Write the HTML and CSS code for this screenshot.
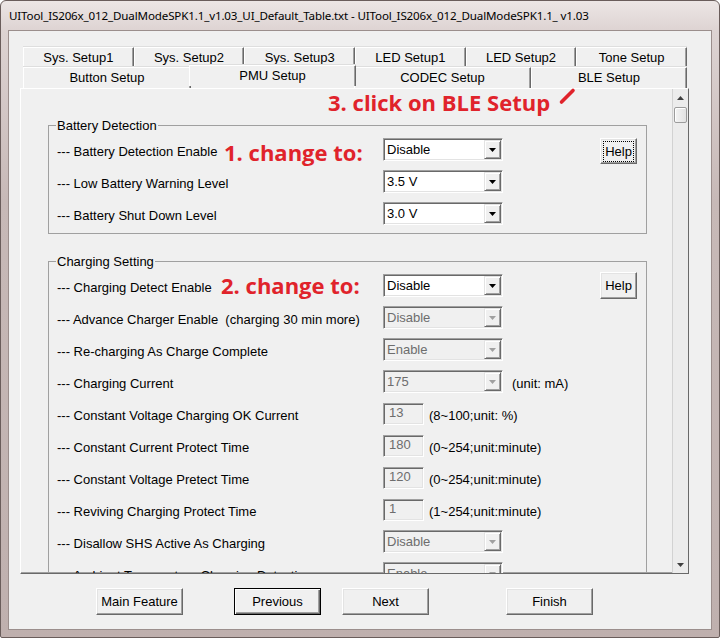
FILE: index.html
```html
<!DOCTYPE html>
<html>
<head>
<meta charset="utf-8">
<link rel="stylesheet" href="styles.css">
</head>
<body>
<div class="window">
  <div class="titlebar">UITool_IS206x_012_DualModeSPK1.1_v1.03_UI_Default_Table.txt - UITool_IS206x_012_DualModeSPK1.1_ v1.03</div>
  <div class="client">
    <div class="tabs">
      <div class="tabrow back">
        <div class="tab">Sys. Setup1</div>
        <div class="tab">Sys. Setup2</div>
        <div class="tab">Sys. Setup3</div>
        <div class="tab">LED Setup1</div>
        <div class="tab">LED Setup2</div>
        <div class="tab">Tone Setup</div>
      </div>
      <div class="tabrow front">
        <div class="tab t-button">Button Setup</div>
        <div class="tab t-pmu selected">PMU Setup</div>
        <div class="tab t-codec">CODEC Setup</div>
        <div class="tab t-ble">BLE Setup</div>
      </div>
    </div>
    <div class="panel">
      <div class="panel-content">
        <fieldset class="group battery">
          <legend>Battery Detection</legend>
          <div class="row">
            <span class="label">--- Battery Detection Enable</span>
            <div class="combo"><span class="combo-text">Disable</span><span class="combo-btn"><svg width="7" height="4" viewBox="0 0 7 4"><path d="M0 0H7L3.5 4Z"/></svg></span></div>
            <button class="help focus"><span>Help</span></button>
          </div>
          <div class="row">
            <span class="label">--- Low Battery Warning Level</span>
            <div class="combo"><span class="combo-text">3.5 V</span><span class="combo-btn"><svg width="7" height="4" viewBox="0 0 7 4"><path d="M0 0H7L3.5 4Z"/></svg></span></div>
          </div>
          <div class="row">
            <span class="label">--- Battery Shut Down Level</span>
            <div class="combo"><span class="combo-text">3.0 V</span><span class="combo-btn"><svg width="7" height="4" viewBox="0 0 7 4"><path d="M0 0H7L3.5 4Z"/></svg></span></div>
          </div>
        </fieldset>
        <fieldset class="group charging">
          <legend>Charging Setting</legend>
          <div class="row">
            <span class="label">--- Charging Detect Enable</span>
            <div class="combo"><span class="combo-text">Disable</span><span class="combo-btn"><svg width="7" height="4" viewBox="0 0 7 4"><path d="M0 0H7L3.5 4Z"/></svg></span></div>
            <button class="help help2"><span>Help</span></button>
          </div>
          <div class="row">
            <span class="label">--- Advance Charger Enable  (charging 30 min more)</span>
            <div class="combo disabled"><span class="combo-text">Disable</span><span class="combo-btn"><svg width="7" height="4" viewBox="0 0 7 4"><path d="M0 0H7L3.5 4Z"/></svg></span></div>
          </div>
          <div class="row">
            <span class="label">--- Re-charging As Charge Complete</span>
            <div class="combo disabled"><span class="combo-text">Enable</span><span class="combo-btn"><svg width="7" height="4" viewBox="0 0 7 4"><path d="M0 0H7L3.5 4Z"/></svg></span></div>
          </div>
          <div class="row">
            <span class="label">--- Charging Current</span>
            <div class="combo disabled"><span class="combo-text">175</span><span class="combo-btn"><svg width="7" height="4" viewBox="0 0 7 4"><path d="M0 0H7L3.5 4Z"/></svg></span></div>
            <span class="suffix after-combo">(unit: mA)</span>
          </div>
          <div class="row">
            <span class="label">--- Constant Voltage Charging OK Current</span>
            <div class="tbox">13</div>
            <span class="suffix">(8~100;unit: %)</span>
          </div>
          <div class="row">
            <span class="label">--- Constant Current Protect Time</span>
            <div class="tbox">180</div>
            <span class="suffix">(0~254;unit:minute)</span>
          </div>
          <div class="row">
            <span class="label">--- Constant Voltage Pretect Time</span>
            <div class="tbox">120</div>
            <span class="suffix">(0~254;unit:minute)</span>
          </div>
          <div class="row">
            <span class="label">--- Reviving Charging Protect Time</span>
            <div class="tbox">1</div>
            <span class="suffix">(1~254;unit:minute)</span>
          </div>
          <div class="row">
            <span class="label">--- Disallow SHS Active As Charging</span>
            <div class="combo disabled"><span class="combo-text">Disable</span><span class="combo-btn"><svg width="7" height="4" viewBox="0 0 7 4"><path d="M0 0H7L3.5 4Z"/></svg></span></div>
          </div>
          <div class="row">
            <span class="label">--- Ambient Temperature Charging Detection</span>
            <div class="combo disabled"><span class="combo-text">Enable</span><span class="combo-btn"><svg width="7" height="4" viewBox="0 0 7 4"><path d="M0 0H7L3.5 4Z"/></svg></span></div>
          </div>
        </fieldset>
      </div>
      <div class="scrollbar">
        <div class="sb-arrow"><svg width="7" height="4" viewBox="0 0 7 4"><path d="M3.5 0L7 4H0Z"/></svg></div>
        <div class="sb-thumb"></div>
        <div class="sb-track"></div>
        <div class="sb-arrow"><svg width="7" height="4" viewBox="0 0 7 4"><path d="M0 0H7L3.5 4Z"/></svg></div>
      </div>
    </div>
    <div class="buttons">
      <button class="btn b-main">Main Feature</button>
      <button class="btn b-prev default">Previous</button>
      <button class="btn b-next">Next</button>
      <button class="btn b-finish">Finish</button>
    </div>
  </div>
  <div class="note note1">1. change to:</div>
  <div class="note note2">2. change to:</div>
  <div class="note note3">3. click on BLE Setup</div>
  <svg class="slash" width="20" height="18" viewBox="0 0 20 18"><path d="M3.5 15L15 3.5" stroke="#e0232b" stroke-width="3.6" stroke-linecap="round"/></svg>
</div>
</body>
</html>
```

FILE: styles.css
```css
* { box-sizing: border-box; }
html, body { margin: 0; padding: 0; background: #ffffff; }
body { font-family: "Liberation Sans", Arial, sans-serif; font-size: 13px; color: #000; }

.window {
  position: relative;
  width: 720px;
  height: 638px;
  display: flex;
  flex-direction: column;
  background: linear-gradient(to bottom, #ece6e5 0px, #ddd3d2 30px, #c7b9b7 200px, #bfb0ae 638px);
  border: 1px solid #6a5d5b;
  border-radius: 6px 6px 2px 2px;
  overflow: hidden;
}

.titlebar {
  height: 29px;
  line-height: 29px;
  padding-left: 8px;
  font-family: "Noto Sans", "DejaVu Sans", sans-serif;
  font-size: 11.6px;
  letter-spacing: -0.15px;
  white-space: nowrap;
  color: #000;
}

.client {
  margin: 0 7px;
  height: 600px;
  background: #f0f0f0;
  border: 1px solid #9b8e8c;
  padding: 16px 0 0 11px;
}

/* tabs */
.tabs { margin-left: 3px; width: 664px; }
.tabrow { display: flex; align-items: flex-start; }
.tabrow.back { height: 20px; }
.tabrow.front { height: 21px; }
.tab {
  height: 20px;
  text-align: center;
  line-height: 19px;
  background: #f0f0f0;
  border-top: 1px solid #ffffff;
  border-left: 1px solid #ffffff;
  border-right: 1px solid #696969;
  box-shadow: inset -1px 0 0 #a0a0a0, 0 -1px 0 #dedede;
  white-space: nowrap;
}
.tabrow.back .tab { flex: 1; }
.tabrow.front .tab { height: 21px; line-height: 20px; }
.t-button { width: 168px; }
.t-pmu { width: 163px; }
.t-codec { width: 177px; }
.t-ble { width: 156px; }
.tab.selected {
  position: relative;
  z-index: 2;
  width: 167px;
  height: 24px;
  margin: -2px -2px 0 -2px;
  line-height: 21px;
}

/* panel */
.panel {
  width: 669px;
  height: 486px;
  display: flex;
  border-top: 1px solid #ffffff;
  border-left: 1px solid #ffffff;
  border-right: 1px solid #696969;
  border-bottom: 1px solid #696969;
  box-shadow: inset -1px -1px 0 #a0a0a0;
}
.panel-content {
  flex: 1;
  overflow: hidden;
  padding: 29px 25px 0 27px;
}

.group {
  margin: 0;
  min-width: 0;
  border: 1px solid #a0a0a0;
  padding: 3px 9px 1px 8px;
}
.group legend {
  padding: 0 1px;
  margin-left: -1px;
  line-height: 15px;
}
.charging { margin-top: 20px; }

.row { display: flex; align-items: flex-start; height: 32px; }
.label { width: 326px; flex-shrink: 0; line-height: 32px; white-space: pre; }

.combo {
  width: 120px;
  height: 23px;
  margin-top: 2px;
  display: flex;
  background: #ffffff;
  border: 1px solid;
  border-color: #a0a0a0 #ffffff #ffffff #a0a0a0;
  box-shadow: inset 1px 1px 0 #696969, inset -1px -1px 0 #e3e3e3;
  padding: 1px;
}
.combo-text { flex: 1; line-height: 19px; padding-left: 2px; }
.combo-btn {
  width: 17px;
  height: 19px;
  display: flex;
  align-items: center;
  justify-content: center;
  background: #f0f0f0;
  border-top: 1px solid #e3e3e3;
  border-left: 1px solid #e3e3e3;
  border-right: 1px solid #696969;
  border-bottom: 1px solid #696969;
  box-shadow: inset 1px 1px 0 #ffffff, inset -1px -1px 0 #a0a0a0;
}
.combo-btn svg { fill: #000; margin-top: 1px; }
.combo.disabled { background: #f0f0f0; }
.combo.disabled .combo-text { color: #6d6d6d; }
.combo.disabled .combo-btn svg { fill: #a0a0a0; }

.tbox {
  width: 41px;
  height: 22px;
  margin-top: 3px;
  background: #f0f0f0;
  color: #6d6d6d;
  border: 1px solid;
  border-color: #a0a0a0 #ffffff #ffffff #a0a0a0;
  box-shadow: inset 1px 1px 0 #696969, inset -1px -1px 0 #e3e3e3;
  padding: 2px 0 0 5px;
  line-height: 13px;
}
.suffix { line-height: 32px; margin-left: 5px; white-space: nowrap; }
.suffix.after-combo { margin-left: 9px; }

.help {
  margin-left: auto;
  margin-top: 2px;
  width: 37px;
  height: 26px;
  padding: 0;
  font: inherit;
  color: #000;
  background: #f0f0f0;
  border: 1px solid;
  border-color: #ffffff #696969 #696969 #ffffff;
  box-shadow: inset -1px -1px 0 #a0a0a0, inset 1px 1px 0 #e3e3e3;
  display: flex;
  align-items: center;
  justify-content: center;
}
.help span { padding: 2px 1px; line-height: 15px; }
.help.focus span { outline: 1px dotted #000; outline-offset: 0; }
.help2 { margin-top: 0; height: 27px; }

/* scrollbar */
.scrollbar {
  width: 16px;
  display: flex;
  flex-direction: column;
  background: #ececec;
  border-left: 1px solid #d2d2d2;
}
.sb-arrow { height: 17px; display: flex; align-items: center; justify-content: center; }
.sb-arrow svg { fill: #404040; }
.sb-thumb {
  height: 16px;
  margin: 1px 1px 0 1px;
  border: 1px solid #9c9c9c;
  border-radius: 2px;
  background: linear-gradient(to right, #f4f4f4, #e2e2e2);
  box-shadow: inset 1px 1px 0 #ffffff;
}
.sb-track { flex: 1; }

/* bottom buttons */
.buttons { display: flex; margin-top: 14px; padding-left: 76px; }
.btn {
  width: 87px;
  height: 27px;
  padding: 0;
  font: inherit;
  color: #000;
  background: #f0f0f0;
  border: 1px solid;
  border-color: #ffffff #696969 #696969 #ffffff;
  box-shadow: inset -1px -1px 0 #a0a0a0, inset 1px 1px 0 #e3e3e3;
}
.btn.default {
  border-color: #000;
  box-shadow: inset 1px 1px 0 #ffffff, inset -1px -1px 0 #696969, inset -2px -2px 0 #a0a0a0;
}
.b-prev { margin-left: 51px; }
.b-next { margin-left: 21px; }
.b-finish { margin-left: 77px; }

/* annotations */
.note {
  position: absolute;
  font-family: "Open Sans", "Noto Sans", sans-serif;
  font-weight: 700;
  font-size: 22px;
  line-height: 22px;
  color: #e0232b;
  white-space: nowrap;
}
.note1 { left: 223px; top: 140px; }
.note2 { left: 220px; top: 273px; }
.note3 { left: 327px; top: 90px; }
.slash { position: absolute; left: 557px; top: 86px; }
```
